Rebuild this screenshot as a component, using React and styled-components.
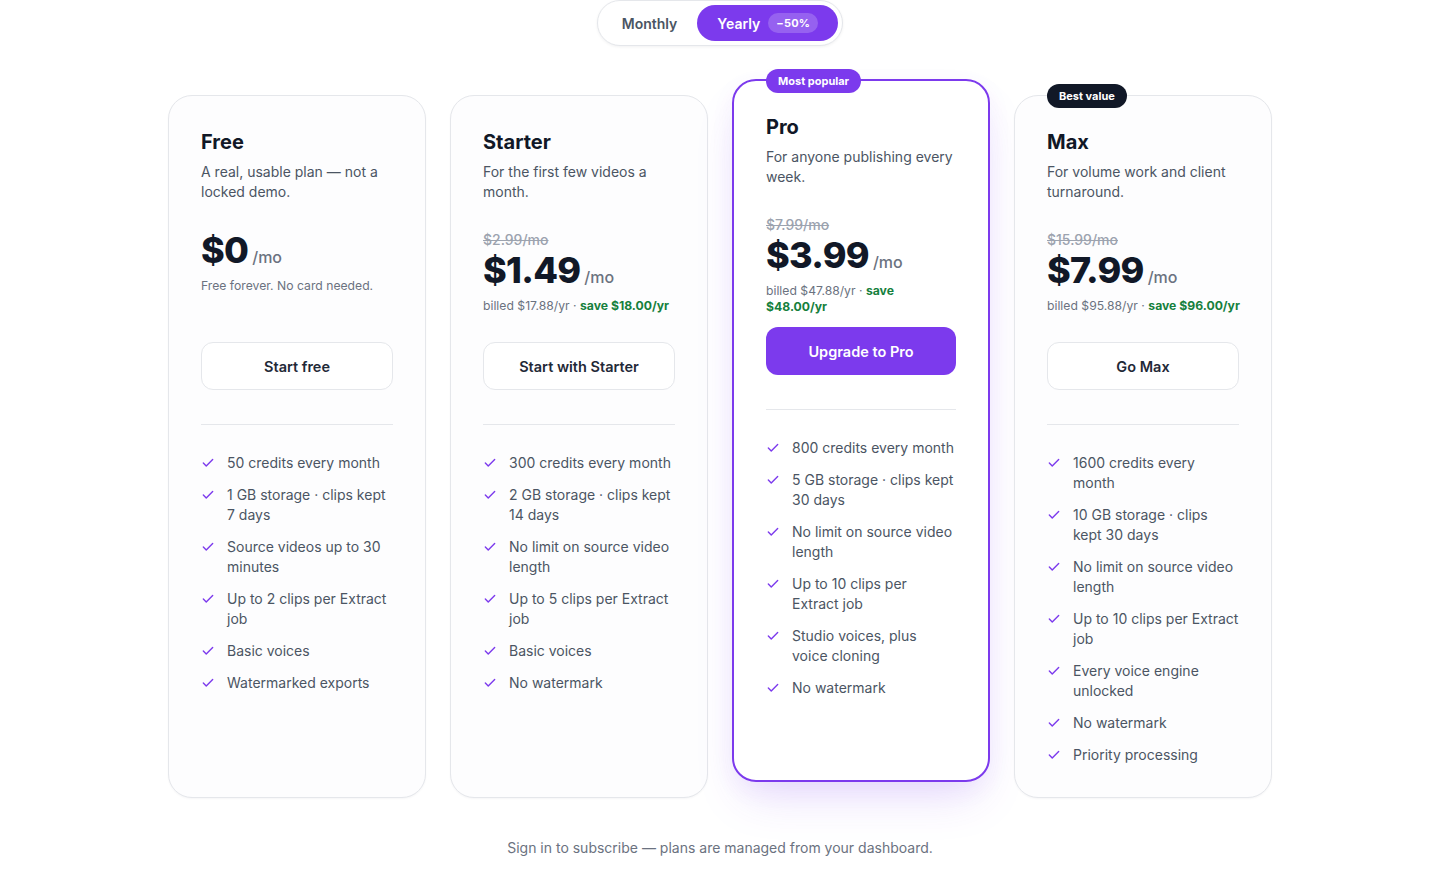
import React, { useState } from "react";
import styled, { createGlobalStyle, css } from "styled-components";

const GlobalStyle = createGlobalStyle`
  * { box-sizing: border-box; }
  body {
    margin: 0;
    background: #ffffff;
    font-family: Inter, "Noto Sans", "Liberation Sans", sans-serif;
    color: #111827;
    -webkit-font-smoothing: antialiased;
  }
`;

const Page = styled.div`
  padding: 0 0 40px;
  display: flex;
  flex-direction: column;
  align-items: center;
`;

const Toggle = styled.div`
  display: flex;
  align-items: center;
  padding: 4px;
  border: 1px solid #e5e7eb;
  border-radius: 999px;
  background: #fff;
  box-shadow: 0 1px 3px rgba(17, 24, 39, 0.06);
`;

const ToggleButton = styled.button`
  display: flex;
  align-items: center;
  gap: 8px;
  height: 36px;
  padding: 0 20px;
  border: none;
  border-radius: 999px;
  font-family: inherit;
  font-size: 14px;
  font-weight: 600;
  cursor: pointer;
  background: ${(p) => (p.active ? "#7c3aed" : "transparent")};
  color: ${(p) => (p.active ? "#ffffff" : "#4b5563")};
`;

const Discount = styled.span`
  padding: 3px 8px;
  border-radius: 999px;
  background: rgba(255, 255, 255, 0.2);
  font-size: 11px;
  font-weight: 700;
  letter-spacing: 0.02em;
`;

const Grid = styled.div`
  margin-top: 49px;
  width: 1104px;
  display: grid;
  grid-template-columns: repeat(4, minmax(0, 1fr));
  gap: 24px;
  align-items: stretch;
`;

const Card = styled.div`
  position: relative;
  display: flex;
  flex-direction: column;
  padding: 32px;
  border-radius: 24px;
  border: 1px solid #e5e7eb;
  background: #fdfdfe;
  box-shadow: 0 1px 2px rgba(17, 24, 39, 0.04);
  ${(p) =>
    p.featured &&
    css`
      border: 2px solid #7c3aed;
      padding-bottom: 30px;
      background: #ffffff;
      transform: translateY(-16px);
      box-shadow: 0 24px 48px -12px rgba(124, 58, 237, 0.18),
        0 8px 24px rgba(124, 58, 237, 0.06);
    `}
`;

const Badge = styled.span`
  position: absolute;
  top: -12px;
  left: 32px;
  height: 24px;
  padding: 0 12px;
  display: flex;
  align-items: center;
  border-radius: 999px;
  font-size: 11px;
  font-weight: 700;
  color: #fff;
  background: ${(p) => (p.dark ? "#111827" : "#7c3aed")};
`;

const Title = styled.h3`
  margin: 0;
  font-size: 20px;
  line-height: 28px;
  font-weight: 700;
  color: #111827;
`;

const Desc = styled.p`
  margin: 6px 0 0;
  font-size: 14px;
  line-height: 20px;
  color: #4b5563;
`;

const PriceBlock = styled.div`
  margin-top: 28px;
  min-height: 102px;
`;

const OldPrice = styled.div`
  font-size: 14px;
  line-height: 20px;
  font-weight: 500;
  color: #9ca3af;
  text-decoration: line-through;
`;

const PriceRow = styled.div`
  display: flex;
  align-items: baseline;
  gap: 4px;
  height: 40px;
`;

const Amount = styled.span`
  font-size: 36px;
  line-height: 40px;
  font-weight: 800;
  letter-spacing: -0.02em;
  color: #111827;
`;

const Per = styled.span`
  font-size: 16px;
  line-height: 1;
  font-weight: 500;
  color: #6b7280;
`;

const Billed = styled.div`
  margin-top: 8px;
  font-size: 12.2px;
  line-height: 16px;
  color: #6b7280;
  white-space: ${(p) => (p.wrap ? "normal" : "nowrap")};
`;

const Save = styled.span`
  font-weight: 700;
  color: #15803d;
`;

const ActionButton = styled.button`
  margin-top: 10px;
  height: 48px;
  width: 100%;
  border-radius: 12px;
  font-family: inherit;
  font-size: 14.5px;
  font-weight: 600;
  cursor: pointer;
  ${(p) =>
    p.primary
      ? css`
          border: none;
          background: #7c3aed;
          color: #fff;
        `
      : css`
          border: 1px solid #e5e7eb;
          background: #fff;
          color: #1f2937;
        `}
`;

const Divider = styled.hr`
  margin: 34px 0 28px;
  border: none;
  border-top: 1px solid #e5e7eb;
`;

const Features = styled.ul`
  margin: 0;
  padding: 0;
  list-style: none;
  display: flex;
  flex-direction: column;
  gap: 12px;
`;

const Feature = styled.li`
  display: flex;
  align-items: flex-start;
  gap: 12px;
  font-size: 14px;
  line-height: 20px;
  color: #4b5563;

  svg {
    flex: none;
    margin-top: 3px;
  }
`;

const Footer = styled.p`
  margin: 40px 0 0;
  font-size: 14px;
  line-height: 20px;
  color: #6b7280;
`;

const Check = () => (
  <svg width="14" height="14" viewBox="0 0 24 24" fill="none" stroke="#7c3aed" strokeWidth="2.4" strokeLinecap="round" strokeLinejoin="round">
    <path d="M20 6 9 17l-5-5" />
  </svg>
);

const plans = [
  {
    name: "Free",
    desc: "A real, usable plan — not a locked demo.",
    price: "$0",
    note: "Free forever. No card needed.",
    cta: "Start free",
    features: [
      "50 credits every month",
      "1 GB storage · clips kept 7 days",
      "Source videos up to 30 minutes",
      "Up to 2 clips per Extract job",
      "Basic voices",
      "Watermarked exports",
    ],
  },
  {
    name: "Starter",
    desc: "For the first few videos a month.",
    old: "$2.99/mo",
    price: "$1.49",
    billed: "$17.88/yr",
    save: "$18.00/yr",
    cta: "Start with Starter",
    features: [
      "300 credits every month",
      "2 GB storage · clips kept 14 days",
      "No limit on source video length",
      "Up to 5 clips per Extract job",
      "Basic voices",
      "No watermark",
    ],
  },
  {
    name: "Pro",
    desc: "For anyone publishing every week.",
    old: "$7.99/mo",
    price: "$3.99",
    billed: "$47.88/yr",
    save: "$48.00/yr",
    cta: "Upgrade to Pro",
    featured: true,
    badge: "Most popular",
    features: [
      "800 credits every month",
      "5 GB storage · clips kept 30 days",
      "No limit on source video length",
      "Up to 10 clips per Extract job",
      "Studio voices, plus voice cloning",
      "No watermark",
    ],
  },
  {
    name: "Max",
    desc: "For volume work and client turnaround.",
    old: "$15.99/mo",
    price: "$7.99",
    billed: "$95.88/yr",
    save: "$96.00/yr",
    cta: "Go Max",
    badge: "Best value",
    dark: true,
    features: [
      "1600 credits every month",
      "10 GB storage · clips kept 30 days",
      "No limit on source video length",
      "Up to 10 clips per Extract job",
      "Every voice engine unlocked",
      "No watermark",
      "Priority processing",
    ],
  },
];

export default function App() {
  const [yearly, setYearly] = useState(true);

  return (
    <Page>
      <GlobalStyle />
      <Toggle>
        <ToggleButton active={!yearly} onClick={() => setYearly(false)}>
          Monthly
        </ToggleButton>
        <ToggleButton active={yearly} onClick={() => setYearly(true)}>
          Yearly <Discount>−50%</Discount>
        </ToggleButton>
      </Toggle>

      <Grid>
        {plans.map((plan) => (
          <Card key={plan.name} featured={plan.featured}>
            {plan.badge && <Badge dark={plan.dark}>{plan.badge}</Badge>}
            <Title>{plan.name}</Title>
            <Desc>{plan.desc}</Desc>
            <PriceBlock>
              {plan.old && <OldPrice>{plan.old}</OldPrice>}
              <PriceRow>
                <Amount>{plan.price}</Amount>
                <Per>/mo</Per>
              </PriceRow>
              <Billed wrap={plan.featured}>
                {plan.billed ? (
                  <>
                    billed {plan.billed} · <Save>save {plan.save}</Save>
                  </>
                ) : (
                  plan.note
                )}
              </Billed>
            </PriceBlock>
            <ActionButton primary={plan.featured}>{plan.cta}</ActionButton>
            <Divider />
            <Features>
              {plan.features.map((f) => (
                <Feature key={f}>
                  <Check />
                  <span>{f}</span>
                </Feature>
              ))}
            </Features>
          </Card>
        ))}
      </Grid>

      <Footer>Sign in to subscribe — plans are managed from your dashboard.</Footer>
    </Page>
  );
}
